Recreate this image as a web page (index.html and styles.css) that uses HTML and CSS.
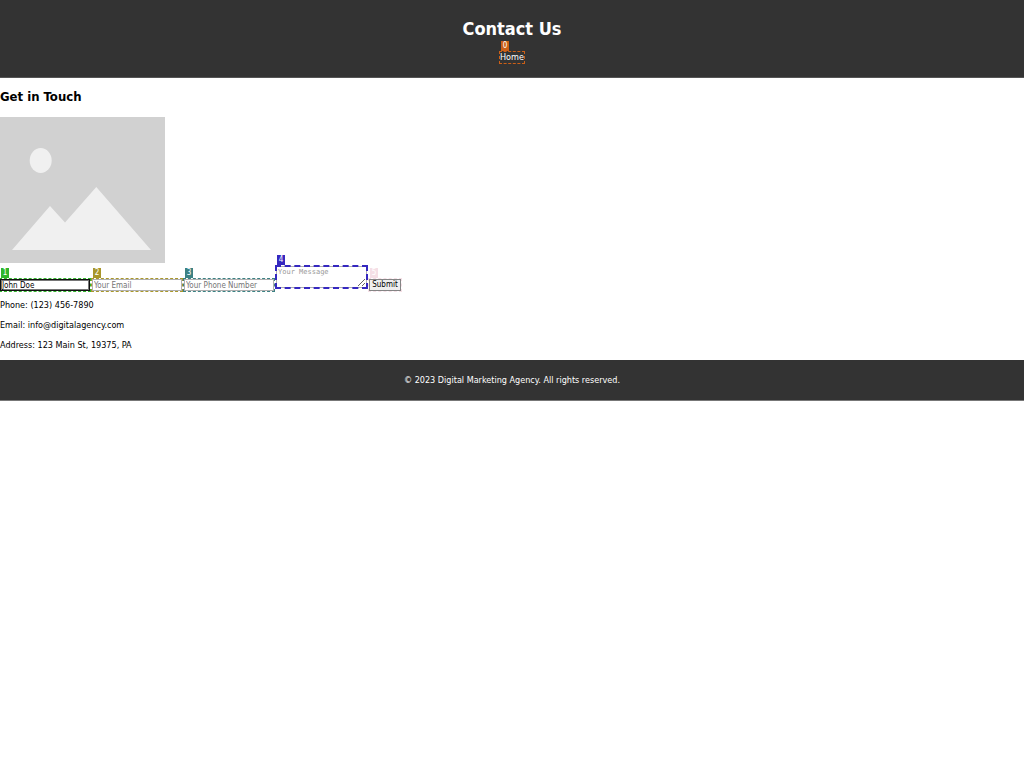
FILE: index.html
```html
<!DOCTYPE html>
<html lang="en">
<head>
<meta charset="utf-8">
<title>Contact Us</title>
<link rel="stylesheet" href="styles.css">
</head>
<body>
<header class="site-header">
  <h1 class="title">Contact Us</h1>
  <nav><span class="mark orange"><a class="home" href="#">Home</a><span class="tag">0</span></span></nav>
</header>
<main>
  <h2 class="subtitle">Get in Touch</h2>
  <svg class="photo" viewBox="0 0 165 146" role="img" aria-label="Placeholder image">
    <rect width="165" height="146" fill="#d1d1d1"/>
    <ellipse cx="40.700" cy="43.500" rx="11" ry="12.500" fill="#f0f0f0"/>
    <path d="M12 133 50 89 65 105.500 96.300 70 151 133Z" fill="#f0f0f0"/>
  </svg>
  <form class="contact-form">
    <span class="mark green"><input class="field filled" type="text" aria-label="Your Name" value="John Doe"><span class="tag">1</span></span>
    <span class="mark olive"><input class="field" type="email" aria-label="Your Email" placeholder="Your Email"><span class="tag">2</span></span>
    <span class="mark teal"><input class="field" type="tel" aria-label="Your Phone Number" placeholder="Your Phone Number"><span class="tag">3</span></span>
    <span class="mark blue"><textarea class="message" aria-label="Your Message" placeholder="Your Message"></textarea><span class="tag">4</span></span>
    <span class="mark pink"><button class="submit" type="submit">Submit</button><span class="tag">5</span></span>
  </form>
  <p class="line">Phone: (123) 456-7890</p>
  <p class="line">Email: info@digitalagency.com</p>
  <p class="line">Address: 123 Main St, 19375, PA</p>
</main>
<footer class="site-footer">© 2023 Digital Marketing Agency. All rights reserved.</footer>
</body>
</html>
```
FILE: styles.css
```css
* { box-sizing: border-box; }
body {
  margin: 0;
  background: #fff;
  color: #000;
  font: 9px/12px "DejaVu Sans Condensed", "DejaVu Sans", sans-serif;
}
.site-header {
  padding: 16px 0 13px;
  background: #333;
  border-bottom: 1px solid #555;
  color: #fff;
  text-align: center;
}
.title { margin: 0 0 10px; font-size: 18px; line-height: 25px; }
.subtitle { margin: 0; padding: 9px 0 11px; font-size: 13px; line-height: 19px; }
.photo { display: block; width: 165px; height: 146px; }

/* Numbered markers around interactive elements */
.mark { position: relative; display: inline-flex; padding: 1px; }
.mark::after {
  content: "";
  position: absolute;
  inset: 0;
  border: 1px dashed var(--mark);
  pointer-events: none;
}
.tag {
  position: absolute;
  left: 2px;
  bottom: 100%;
  width: 8px;
  height: 10px;
  background: var(--mark);
  color: #fff;
  font-size: 8px;
  line-height: 10px;
  text-align: center;
}
.orange { --mark: #cc5f16; }
.green { --mark: #30b52b; }
.olive { --mark: #a8962b; }
.teal { --mark: #3c8183; }
.blue { --mark: #3528c0; }
.pink { --mark: #f5dfe6; }
.home { color: #fff; line-height: 11px; text-decoration: none; }

.contact-form { display: flex; align-items: flex-end; margin-left: -1px; padding-top: 2px; }
.field, .message, .submit {
  margin: 0;
  border: 1px solid #b0b0b0;
  border-radius: 0;
  outline: 0;
  font-family: inherit;
  font-size: 8px;
  line-height: 10px;
}
.field {
  width: 90px;
  height: 12px;
  padding: 0 1px;
  background: #fff;
  color: #000;
}
.filled { padding: 0 1px; border-color: #111; box-shadow: inset 0 0 0 1px #777; }
.field::placeholder { color: #757575; }
.blue { margin-bottom: 3px; }
.message {
  width: 91px;
  height: 22px;
  padding: 1px;
  font-family: "DejaVu Sans Mono", monospace;
  font-size: 7px;
  line-height: 8px;
}
.message::placeholder { color: #999; }
.blue::after { border-width: 2px; }
.submit {
  width: 32px;
  height: 12px;
  padding: 0;
  border-color: #858585;
  background: #efefef;
  color: #000;
}
.line { margin: 0; padding: 7px 0 1px; }
.line:last-child { padding-bottom: 9px; }
.site-footer {
  padding: 14px 0;
  background: #333;
  border-bottom: 1px solid #777;
  color: #fff;
  text-align: center;
}
```
